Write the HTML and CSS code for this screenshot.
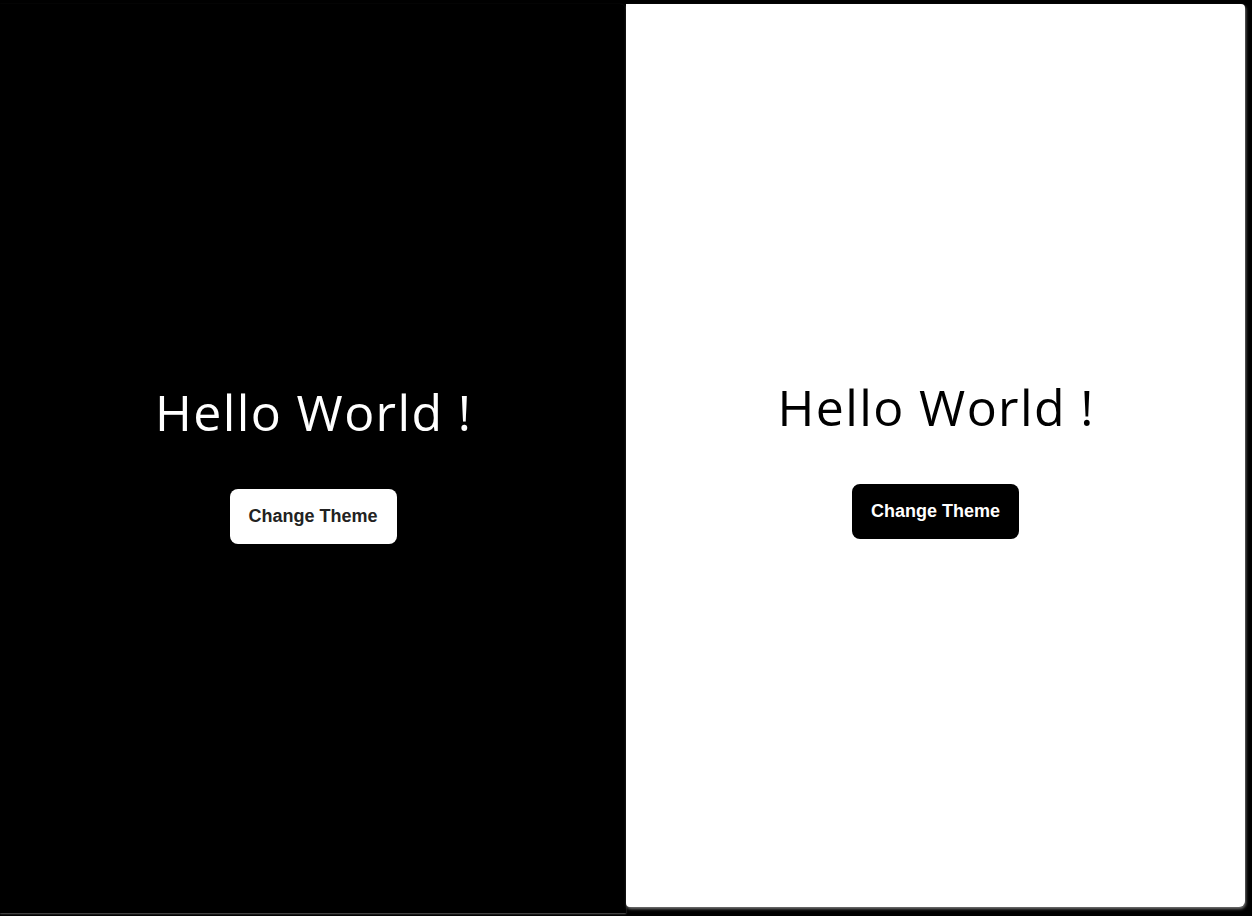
FILE: index.html
```html
<!DOCTYPE html>
<html>
<head>
<meta charset="utf-8">
<link rel="stylesheet" href="styles.css">
</head>
<body>
<div class="frame">
  <section class="panel panel-dark">
    <h1 class="title">Hello World !</h1>
    <button class="btn btn-light">Change Theme</button>
  </section>
  <section class="panel panel-light">
    <h1 class="title">Hello World !</h1>
    <button class="btn btn-dark">Change Theme</button>
  </section>
</div>
</body>
</html>
```
FILE: styles.css
```css
html, body {
  margin: 0;
  padding: 0;
  background: #000;
}
.frame {
  display: flex;
  align-items: flex-start;
  padding: 4px 7px 0 0;
  height: 916px;
  box-sizing: border-box;
}
.panel {
  display: flex;
  flex-direction: column;
  align-items: center;
  justify-content: center;
  gap: 47px;
  box-sizing: border-box;
}
.panel-dark {
  width: 626px;
  height: 909px;
  padding-top: 8px;
  background: #000;
  border-radius: 0 6px 0 0;
  box-shadow: 0 1px 2px rgba(255,255,255,0.35);
}
.panel-light {
  flex: 1;
  height: 903px;
  padding-top: 4px;
  background: #fff;
  border-radius: 0 4px 6px 4px;
  box-shadow: 1px 2px 3px rgba(255,255,255,0.45);
}
.title {
  margin: 0;
  font-family: "Open Sans", sans-serif;
  font-weight: 400;
  font-size: 50px;
  line-height: 60px;
  letter-spacing: 1.4px;
  padding-left: 1.4px;
}
.panel-dark .title { color: #fff; }
.panel-light .title { color: #000; }
.btn {
  font-family: "Liberation Sans", Arial, sans-serif;
  font-weight: 700;
  font-size: 18px;
  width: 167px;
  height: 55px;
  border: none;
  border-radius: 8px;
  padding: 0;
  cursor: pointer;
}
.btn-light {
  background: #fff;
  color: #222;
}
.btn-dark {
  background: #000;
  color: #fff;
}
```
